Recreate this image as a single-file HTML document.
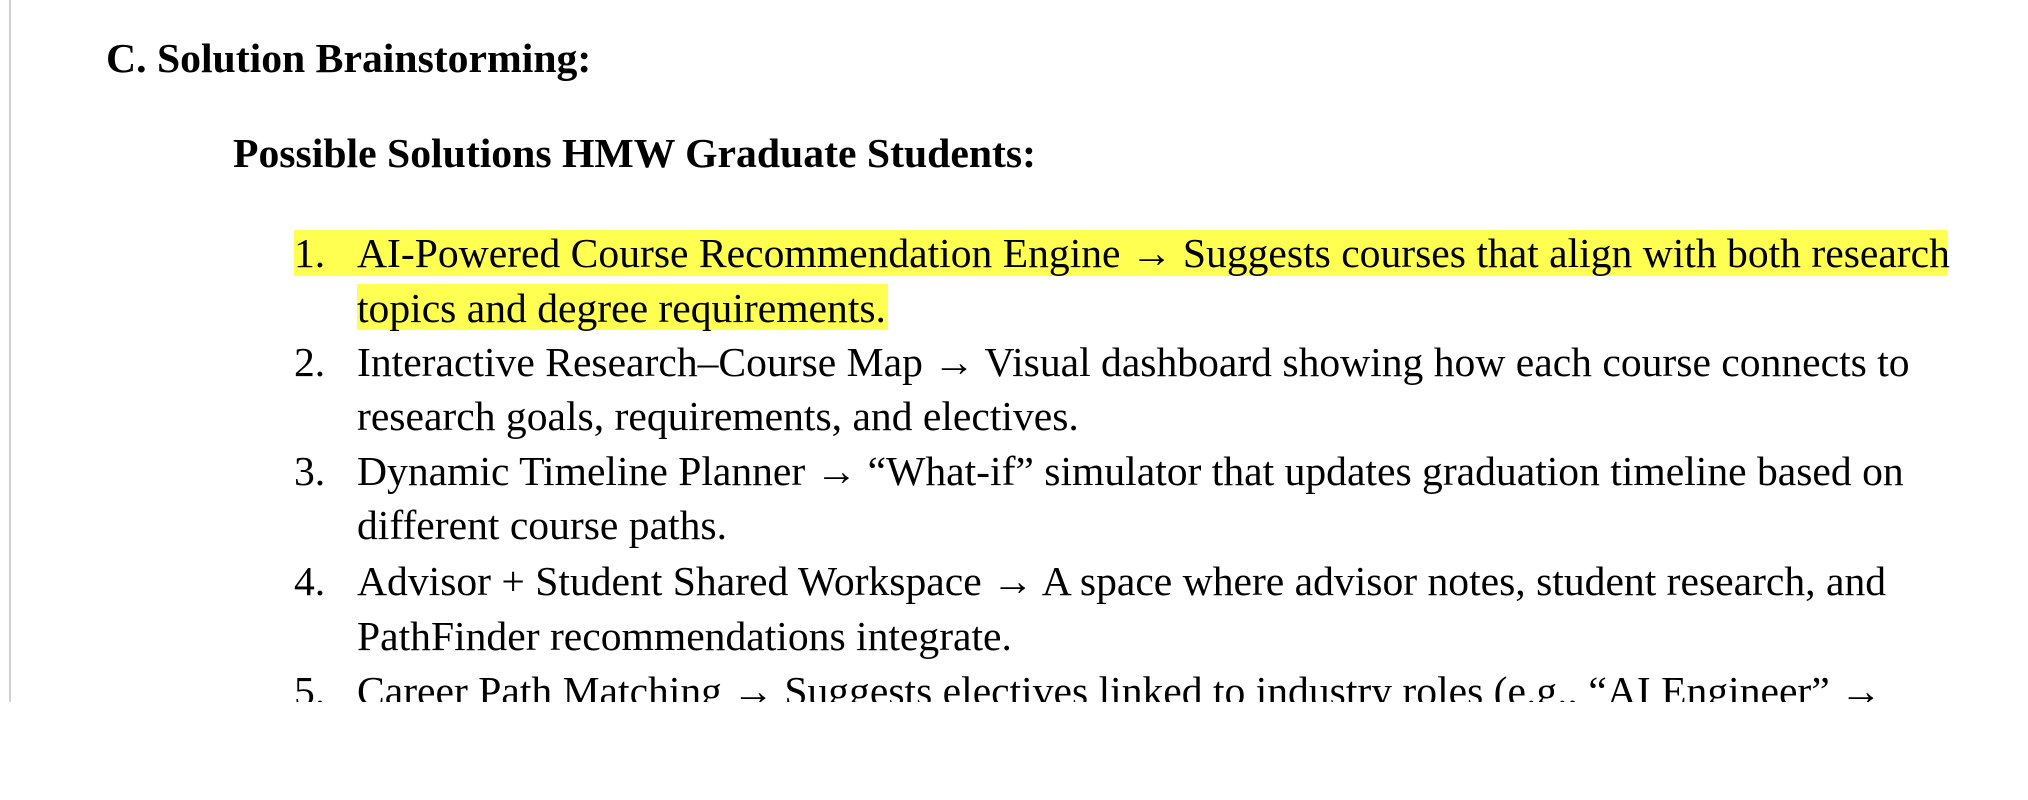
<!DOCTYPE html>
<html><head><meta charset="utf-8"><style>
html,body{margin:0;padding:0;background:#fff;width:2028px;height:800px;overflow:hidden}
#page{position:absolute;left:9px;top:0;width:2019px;height:702px;overflow:hidden;border-left:2px solid #d0d0d0;box-sizing:border-box}
.l{position:absolute;white-space:nowrap;font-family:"Liberation Serif",serif;font-size:41.6px;line-height:48px;color:#000}
.b{font-weight:bold;font-size:41.7px}
.hl{background:#ffff52}
</style></head><body>
<div id="page">
<div class="l b" style="left:95px;top:35px">C. Solution Brainstorming:</div>
<div class="l b" style="left:222px;top:130px">Possible Solutions HMW Graduate Students:</div>

<div class="l hl" style="left:283px;top:230px;height:46px;width:1653px"></div>
<div class="l hl" style="left:346px;top:284px;height:46px;width:531px"></div>

<div class="l" style="left:283px;top:229px">1.</div>
<div class="l" style="left:346px;top:229px">AI-Powered Course Recommendation Engine → Suggests courses that align with both research</div>
<div class="l" style="left:346px;top:284px">topics and degree requirements.</div>
<div class="l" style="left:283px;top:338px">2.</div>
<div class="l" style="left:346px;top:338px">Interactive Research–Course Map → Visual dashboard showing how each course connects to</div>
<div class="l" style="left:346px;top:392px">research goals, requirements, and electives.</div>
<div class="l" style="left:283px;top:447px">3.</div>
<div class="l" style="left:346px;top:447px">Dynamic Timeline Planner → “What-if” simulator that updates graduation timeline based on</div>
<div class="l" style="left:346px;top:501px">different course paths.</div>
<div class="l" style="left:283px;top:557px">4.</div>
<div class="l" style="left:346px;top:557px">Advisor + Student Shared Workspace → A space where advisor notes, student research, and</div>
<div class="l" style="left:346px;top:612px">PathFinder recommendations integrate.</div>
<div class="l" style="left:283px;top:667px">5.</div>
<div class="l" style="left:346px;top:667px">Career Path Matching → Suggests electives linked to industry roles (e.g., “AI Engineer” →</div>
</div>
</body></html>
